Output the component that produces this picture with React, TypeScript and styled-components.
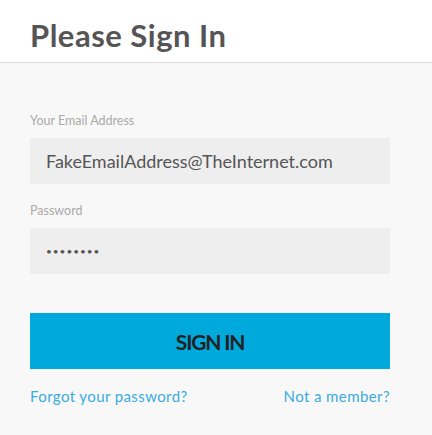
import React from 'react';
import styled, { createGlobalStyle } from 'styled-components';

const GlobalStyle = createGlobalStyle`
  html, body {
    margin: 0;
    padding: 0;
    background: #f8f8f8;
    font-family: Lato, "Liberation Sans", sans-serif;
  }
`;

const Header = styled.header`
  background: #fff;
  height: 63px;
  border-bottom: 1px solid #dcdcdc;
  padding-left: 30px;
  display: flex;
  align-items: center;
  box-sizing: border-box;
`;

const Title = styled.h1`
  margin: 0;
  padding-top: 8px;
  font-family: Lato, sans-serif;
  font-weight: 700;
  font-size: 31px;
  color: #555;
  letter-spacing: 0.5px;
`;

const Form = styled.form`
  width: 360px;
  padding: 50px 0 0 30px;
  display: flex;
  flex-direction: column;
`;

const Label = styled.label`
  font-size: 12.5px;
  color: #aaa;
  line-height: 16px;
  margin-bottom: 9px;
`;

const Field = styled.div<{ $last?: boolean }>`
  display: flex;
  flex-direction: column;
  margin-bottom: ${(p) => (p.$last ? '39px' : '19px')};
`;

const Input = styled.input<{ $secret?: boolean }>`
  all: unset;
  box-sizing: border-box;
  height: 46px;
  width: 100%;
  background: #eee;
  padding: 0 16px;
  font-family: Lato, sans-serif;
  font-size: ${(p) => (p.$secret ? '10px' : '18px')};
  letter-spacing: ${(p) => (p.$secret ? '1px' : '0')};
  color: #555;
`;

const Button = styled.button`
  all: unset;
  box-sizing: border-box;
  height: 56px;
  width: 100%;
  background: #00a9dc;
  color: #222;
  text-align: center;
  font-family: Lato, sans-serif;
  font-weight: 700;
  font-size: 21px;
  letter-spacing: -1.2px;
  cursor: pointer;
`;

const Links = styled.div`
  display: flex;
  justify-content: space-between;
  margin-top: 18px;
`;

const TextLink = styled.a`
  font-size: 15px;
  line-height: 18px;
  color: #3aabe0;
  text-decoration: none;
  letter-spacing: 0.4px;
`;

export default function App() {
  return (
    <>
      <GlobalStyle />
      <Header>
        <Title>Please Sign In</Title>
      </Header>
      <Form onSubmit={(e) => e.preventDefault()}>
        <Field>
          <Label>Your Email Address</Label>
          <Input type="email" defaultValue="FakeEmailAddress@TheInternet.com" />
        </Field>
        <Field $last>
          <Label>Password</Label>
          <Input type="password" $secret defaultValue="password" />
        </Field>
        <Button type="submit">SIGN IN</Button>
        <Links>
          <TextLink href="#">Forgot your password?</TextLink>
          <TextLink href="#">Not a member?</TextLink>
        </Links>
      </Form>
    </>
  );
}
